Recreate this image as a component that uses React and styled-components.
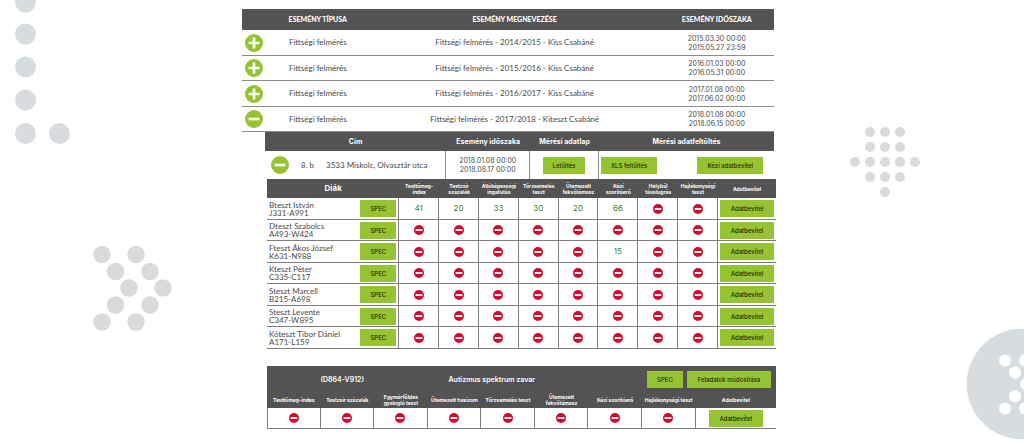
import styled, { createGlobalStyle } from "styled-components";

const GlobalStyle = createGlobalStyle`
    * {
        box-sizing: border-box;
    }
    body {
        margin: 0;
        background-color: #ffffff;
        color: #4a4a4a;
        font-family: Lato, "Open Sans", sans-serif;
        font-size: 8px;
        line-height: 9px;
    }
`;

const Page = styled.div`
    position: relative;
    min-height: 100vh;
    overflow: hidden;
    display: grid;
    grid-template-columns: 242fr 534fr 248fr;
`;

const Ornament = styled.svg`
    position: absolute;
    z-index: 0;
    top: ${(props) => props.$top}px;
    left: ${(props) => props.$left};
    right: ${(props) => props.$right};
    fill: ${(props) => props.$fill || "#dadada"};
`;

const Main = styled.main`
    grid-column: 2;
    position: relative;
    z-index: 1;
    padding: 9px 0 12px;
`;

const Table = styled.table`
    width: 100%;
    table-layout: fixed;
    border-collapse: separate;
    border-spacing: 0;
    text-align: center;

    th, td {
        padding: 0;
        vertical-align: middle;
    }
`;

const EventTable = styled(Table)`
    width: calc(100% - 2px);

    th {
        height: 21px;
        background-color: #535353;
        color: #ffffff;
        font-size: 7px;
        font-weight: 900;
    }
    td {
        height: 26px;
        border-bottom: 1px solid #8c8c8c;
    }
    tr:nth-child(even) td {
        height: 25px;
    }
`;

const Nested = styled.div`
    padding-left: 23px;
`;

const PlaceTable = styled(Table)`
    width: calc(100% - 2px);

    th {
        height: 19px;
        background-color: #535353;
        color: #ffffff;
        font-family: Inter, sans-serif;
        font-size: 7px;
        font-weight: 700;
    }
    td {
        height: 28px;
        border-right: 1px solid #8c8c8c;
    }
    td:nth-child(n + 4) {
        border-right: none;
    }
    td:nth-child(4) {
        padding-left: 2px;
        text-align: left;
    }
`;

const Place = styled.div`
    display: flex;
    align-items: center;
    padding-left: 6px;
    gap: 12px;
`;

const Period = styled.div`
    font-family: Inter, sans-serif;
    font-size: 7px;
`;

const Students = styled.div`
    padding-left: 2px;
`;

const ResultTable = styled(Table)`
    th {
        height: 19px;
        background-color: #535353;
        color: #ffffff;
        font-family: Inter, sans-serif;
        font-size: 5px;
        line-height: 6px;
        font-weight: 700;
    }
    td {
        height: 22px;
        border-right: 1px solid #7d7d7d;
        border-bottom: 1px solid #7d7d7d;
    }
    tr:nth-child(even) td {
        height: 21px;
    }
    td:last-child {
        border-right: none;
    }
`;

const SpecialTable = styled(ResultTable)`
    th {
        height: 16px;
    }
    td {
        height: 21px;
    }
    td:first-child {
        border-left: 1px solid #7d7d7d;
    }
`;

const MainHead = styled.span`
    font-size: 8px;
`;

const Student = styled.div`
    display: flex;
    align-items: center;
    justify-content: space-between;
    padding: 0 2px;
    text-align: left;
    line-height: 8px;
`;

const Value = styled.span`
    color: #38803a;
    font-family: Inter, sans-serif;
`;

const Button = styled.button`
    height: 17px;
    min-width: ${(props) => props.$width}px;
    padding: 0 10px;
    border: none;
    background-color: #96c332;
    color: #1d2b08;
    font-family: Inter, sans-serif;
    font-size: 6px;
    font-weight: 500;
    line-height: 9px;
    white-space: nowrap;
    vertical-align: middle;
    cursor: pointer;
`;

const Toggle = styled.button`
    display: inline-flex;
    padding: 0;
    border: none;
    background: none;
    vertical-align: middle;
    cursor: pointer;
`;

const Missing = styled.svg`
    display: block;
    margin: 0 auto;
`;

const Special = styled.section`
    margin-top: 17px;
    padding-left: 2px;
`;

const SpecialBar = styled.header`
    display: grid;
    grid-template-columns: 152fr 150fr 207fr;
    align-items: center;
    height: 26px;
    padding-right: 5px;
    background-color: #535353;
    color: #ffffff;
    font-family: Inter, sans-serif;
    font-size: 7px;
    font-weight: 600;
    text-align: center;
    white-space: nowrap;
`;

const Actions = styled.div`
    display: flex;
    justify-content: flex-end;
    gap: 4px;
`;

const events = [
    { name: "Fittségi felmérés - 2014/2015 - Kiss Csabáné", from: "2015.03.30 00:00", to: "2015.05.27 23:59" },
    { name: "Fittségi felmérés - 2015/2016 - Kiss Csabáné", from: "2016.01.03 00:00", to: "2016.05.31 00:00" },
    { name: "Fittségi felmérés - 2016/2017 - Kiss Csabáné", from: "2017.01.08 00:00", to: "2017.06.02 00:00" },
    { name: "Fittségi felmérés - 2017/2018 - Kiteszt Csabáné", from: "2018.01.08 00:00", to: "2018.06.15 00:00", open: true },
];

const tests = [
    ["Testtömeg-", "index"],
    ["Testzsír", "százalék"],
    ["Állóképességi", "ingafutás"],
    ["Törzsemelés", "teszt"],
    ["Ütemezett", "fekvőtámasz"],
    ["Kézi", "szorítóerő"],
    ["Helyből", "távolugrás"],
    ["Hajlékonysági", "teszt"],
];

const students = [
    { name: "Bteszt István", code: "J331-A991", values: [41, 20, 33, 30, 20, 66] },
    { name: "Dteszt Szabolcs", code: "A493-W424", values: [] },
    { name: "Fteszt Ákos József", code: "K631-N988", values: [null, null, null, null, null, 15] },
    { name: "Kteszt Péter", code: "C335-C117", values: [] },
    { name: "Steszt Marcell", code: "B215-A698", values: [] },
    { name: "Steszt Levente", code: "C347-W895", values: [] },
    { name: "Kóteszt Tibor Dániel", code: "A171-L159", values: [] },
];

const specialTests = [
    ["Testtömeg-index"],
    ["Testzsír százalék"],
    ["Egymérföldes", "gyalogló teszt"],
    ["Ütemezett hasizom"],
    ["Törzsemelés teszt"],
    ["Ütemezett", "fekvőtámasz"],
    ["Kézi szorítóerő"],
    ["Hajlékonysági teszt"],
];

const Lines = ({ items }) => items.map((item) => <div key={item}>{item}</div>);

const ToggleButton = ({ open }) => (
    <Toggle aria-label={open ? "Bezárás" : "Megnyitás"} aria-expanded={!!open}>
        <svg width="18" height="18" viewBox="0 0 18 18">
            <circle cx="9" cy="9" r="9" fill="#96c332" />
            <path d={open ? "M3.6 9H14.4" : "M3.6 9H14.4M9 3.6V14.4"} stroke="#ffffff" strokeWidth="2.6" />
        </svg>
    </Toggle>
);

const MissingIcon = () => (
    <Missing width="10" height="10" viewBox="0 0 10 10" role="img" aria-label="Nincs adat">
        <circle cx="5" cy="5" r="5" fill="#cf0a2c" />
        <path d="M1.6 5H8.4" stroke="#ffffff" strokeWidth="1.8" />
    </Missing>
);

const Dots = ({ points, r }) => points.map(([x, y]) => <circle key={`${x}-${y}`} cx={x} cy={y} r={r} />);

const Background = () => (
    <>
        <Ornament $top={0} $left="0" $fill="#d9dcdf" width="80" height="150" aria-hidden="true">
            <Dots r={10.5} points={[[25.5, 2], [25.5, 34], [25.5, 67], [25.5, 100], [25.5, 133.5], [59.5, 133.5]]} />
        </Ornament>
        <Ornament $top={240} $left="9%" width="84" height="96" aria-hidden="true">
            <Dots
                r={8.7}
                points={[[10, 14.5], [44, 14.5], [23.5, 31.5], [58, 31.5], [37, 48], [71, 48], [23.5, 65], [58, 65], [10, 82], [44, 82]]}
            />
        </Ornament>
        <Ornament $top={120} $right="10%" width="73" height="84" aria-hidden="true">
            <Dots
                r={5}
                points={[
                    [21, 12], [36, 12], [51, 12],
                    [21, 27], [36, 27], [51, 27],
                    [6, 42], [21, 42], [36, 42], [51, 42], [66, 42],
                    [21, 57], [36, 57], [51, 57],
                    [36, 72],
                ]}
            />
        </Ornament>
        <Ornament $top={328} $right="0" $fill="#d9dcdf" width="58" height="112" aria-hidden="true">
            <circle cx="56" cy="56" r="55.3" />
            <g fill="#ffffff">
                <Dots r={6} points={[[39, 32.5], [59, 32.5], [49, 44.5], [60, 56], [49, 68.3], [39, 80.5], [59, 80.5]]} />
            </g>
        </Ornament>
    </>
);

const Events = () => (
    <EventTable>
        <colgroup>
            <col style={{ width: "4.5%" }} />
            <col style={{ width: "19.5%" }} />
            <col />
            <col style={{ width: "21.5%" }} />
        </colgroup>
        <thead>
            <tr>
                <th></th>
                <th>ESEMÉNY TÍPUSA</th>
                <th>ESEMÉNY MEGNEVEZÉSE</th>
                <th>ESEMÉNY IDŐSZAKA</th>
            </tr>
        </thead>
        <tbody>
            {events.map((event) => (
                <tr key={event.name}>
                    <td><ToggleButton open={event.open} /></td>
                    <td>Fittségi felmérés</td>
                    <td>{event.name}</td>
                    <td><Period><Lines items={[event.from, event.to]} /></Period></td>
                </tr>
            ))}
        </tbody>
    </EventTable>
);

const Places = () => (
    <PlaceTable>
        <colgroup>
            <col style={{ width: "35.6%" }} />
            <col style={{ width: "16.5%" }} />
            <col style={{ width: "13.5%" }} />
            <col style={{ width: "17.2%" }} />
            <col />
        </colgroup>
        <thead>
            <tr>
                <th>Cím</th>
                <th>Esemény időszaka</th>
                <th>Mérési adatlap</th>
                <th colSpan={2}>Mérési adatfeltöltés</th>
            </tr>
        </thead>
        <tbody>
            <tr>
                <td>
                    <Place>
                        <ToggleButton open />
                        <span>8. b</span>
                        <span>3533 Miskolc, Olvasztár utca</span>
                    </Place>
                </td>
                <td><Period><Lines items={["2018.01.08 00:00", "2018.08.17 00:00"]} /></Period></td>
                <td><Button>Letöltés</Button></td>
                <td><Button>XLS feltöltés</Button></td>
                <td><Button>Kézi adatbevitel</Button></td>
            </tr>
        </tbody>
    </PlaceTable>
);

const Results = () => (
    <ResultTable>
        <colgroup>
            <col style={{ width: "26%" }} />
            {tests.map((test) => <col key={test[0]} />)}
            <col style={{ width: "11.4%" }} />
        </colgroup>
        <thead>
            <tr>
                <th><MainHead>Diák</MainHead></th>
                {tests.map((test) => <th key={test[0]}><Lines items={test} /></th>)}
                <th>Adatbevitel</th>
            </tr>
        </thead>
        <tbody>
            {students.map((student) => (
                <tr key={student.code}>
                    <td>
                        <Student>
                            <div><Lines items={[student.name, student.code]} /></div>
                            <Button $width={36}>SPEC</Button>
                        </Student>
                    </td>
                    {tests.map((test, i) => (
                        <td key={test[0]}>
                            {student.values[i] ? <Value>{student.values[i]}</Value> : <MissingIcon />}
                        </td>
                    ))}
                    <td><Button $width={54}>Adatbevitel</Button></td>
                </tr>
            ))}
        </tbody>
    </ResultTable>
);

const SpecialResults = () => (
    <Special>
        <SpecialBar>
            <span>(D864-V912)</span>
            <span>Autizmus spektrum zavar</span>
            <Actions>
                <Button $width={36}>SPEC</Button>
                <Button $width={84}>Feladatok módosítása</Button>
            </Actions>
        </SpecialBar>
        <SpecialTable>
            <colgroup>
                {specialTests.map((test) => <col key={test[0]} />)}
                <col style={{ width: "15.8%" }} />
            </colgroup>
            <thead>
                <tr>
                    {specialTests.map((test) => <th key={test[0]}><Lines items={test} /></th>)}
                    <th>Adatbevitel</th>
                </tr>
            </thead>
            <tbody>
                <tr>
                    {specialTests.map((test) => <td key={test[0]}><MissingIcon /></td>)}
                    <td><Button $width={54}>Adatbevitel</Button></td>
                </tr>
            </tbody>
        </SpecialTable>
    </Special>
);

const App = () => {
    return (
        <Page>
            <GlobalStyle />
            <Background />
            <Main>
                <Events />
                <Nested>
                    <Places />
                    <Students>
                        <Results />
                    </Students>
                    <SpecialResults />
                </Nested>
            </Main>
        </Page>
    )
}

export default App
